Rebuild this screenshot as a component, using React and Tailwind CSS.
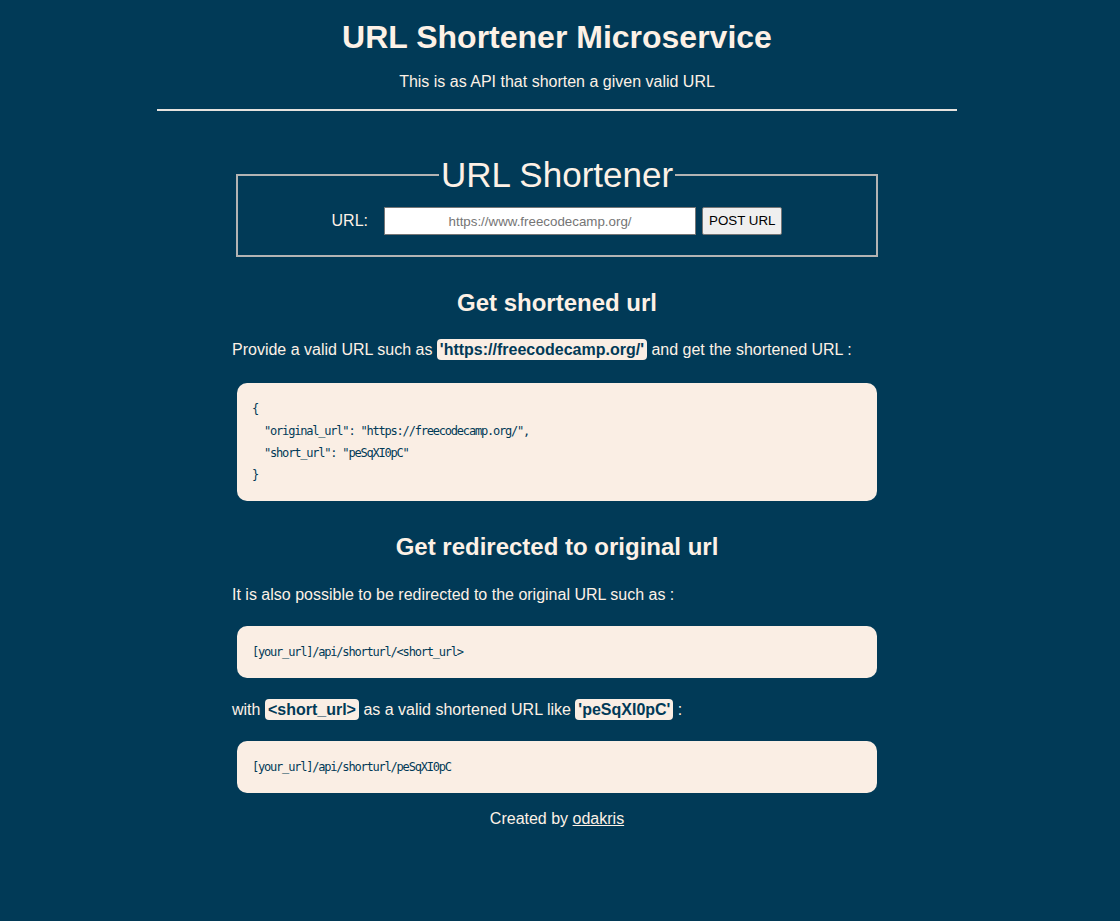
export default function App() {
  const codeBlock =
    "mx-[5px] rounded-[10px] bg-[#faeee4] px-[15px] py-[15px] text-[12px] leading-[22px] tracking-[-1.2px] text-[#013a57] whitespace-pre font-['DejaVu_Sans_Mono',monospace]";
  const inlineCode =
    "rounded-[4px] bg-[#faeee4] px-[3px] py-[2px] font-bold text-[#013a57] font-['Liberation_Sans',Arial,sans-serif] text-[16px]";

  return (
    <div className="min-h-[921px] bg-[#013a57] pr-[6px] pb-10 font-['Liberation_Sans',Arial,sans-serif] text-[#fdf1e6]">
      {/* Header */}
      <header className="mx-auto w-[800px] pt-[19px] text-center">
        <h1 className="text-[32px] font-bold leading-[37px]">
          URL Shortener Microservice
        </h1>
        <p className="mt-[17px] text-[16px] leading-[18px]">
          This is as API that shorten a given valid URL
        </p>
        <hr className="mt-[18px] border-t-2 border-[#e6e2de]" />
      </header>

      <main className="mx-auto w-[650px]">
        {/* Form */}
        <form className="mt-[43px]" onSubmit={(e) => e.preventDefault()}>
          <fieldset className="mx-[4px] border-2 border-[#b3b3b3] px-4 pt-[12px] pb-[20px]">
            <legend className="mx-auto px-[2px] text-[35px] leading-[41px]">
              URL Shortener
            </legend>
            <div className="flex items-center justify-center">
              <label htmlFor="url_input" className="mr-[16px] text-[16px]">
                URL:
              </label>
              <input
                id="url_input"
                type="text"
                placeholder="https://www.freecodecamp.org/"
                className="h-[28px] w-[312px] border border-[#767676] bg-white px-2 text-center text-[13.33px] text-black placeholder:text-[#757575]"
              />
              <button
                type="submit"
                className="ml-[6px] h-[28px] rounded-[2px] border border-[#767676] bg-[#efefef] px-[6px] text-[13.33px] text-black"
              >
                POST URL
              </button>
            </div>
          </fieldset>
        </form>

        {/* Get shortened url */}
        <h2 className="mt-[32px] text-center text-[24px] font-bold leading-[28px]">
          Get shortened url
        </h2>
        <p className="mt-[22px] text-[16px] leading-[22px]">
          Provide a valid URL such as{" "}
          <code className={inlineCode}>'https://freecodecamp.org/'</code> and get
          the shortened URL :
        </p>
        <pre className={`mt-[22px] ${codeBlock}`}>
{`{
  "original_url": "https://freecodecamp.org/",
  "short_url": "peSqXI0pC"
}`}
        </pre>

        {/* Redirect */}
        <h2 className="mt-[32px] text-center text-[24px] font-bold leading-[28px]">
          Get redirected to original url
        </h2>
        <p className="mt-[23px] text-[16px] leading-[22px]">
          It is also possible to be redirected to the original URL such as :
        </p>
        <pre className={`mt-[20px] ${codeBlock}`}>
          {"[your_url]/api/shorturl/<short_url>"}
        </pre>
        <p className="mt-[21px] text-[16px] leading-[22px]">
          with <code className={inlineCode}>{"<short_url>"}</code> as a valid
          shortened URL like <code className={inlineCode}>'peSqXI0pC'</code> :
        </p>
        <pre className={`mt-[20px] ${codeBlock}`}>
          {"[your_url]/api/shorturl/peSqXI0pC"}
        </pre>

        {/* Footer */}
        <p className="mt-[17px] text-center text-[16px] leading-[18px]">
          Created by{" "}
          <a href="#" className="underline">
            odakris
          </a>
        </p>
      </main>
    </div>
  );
}
